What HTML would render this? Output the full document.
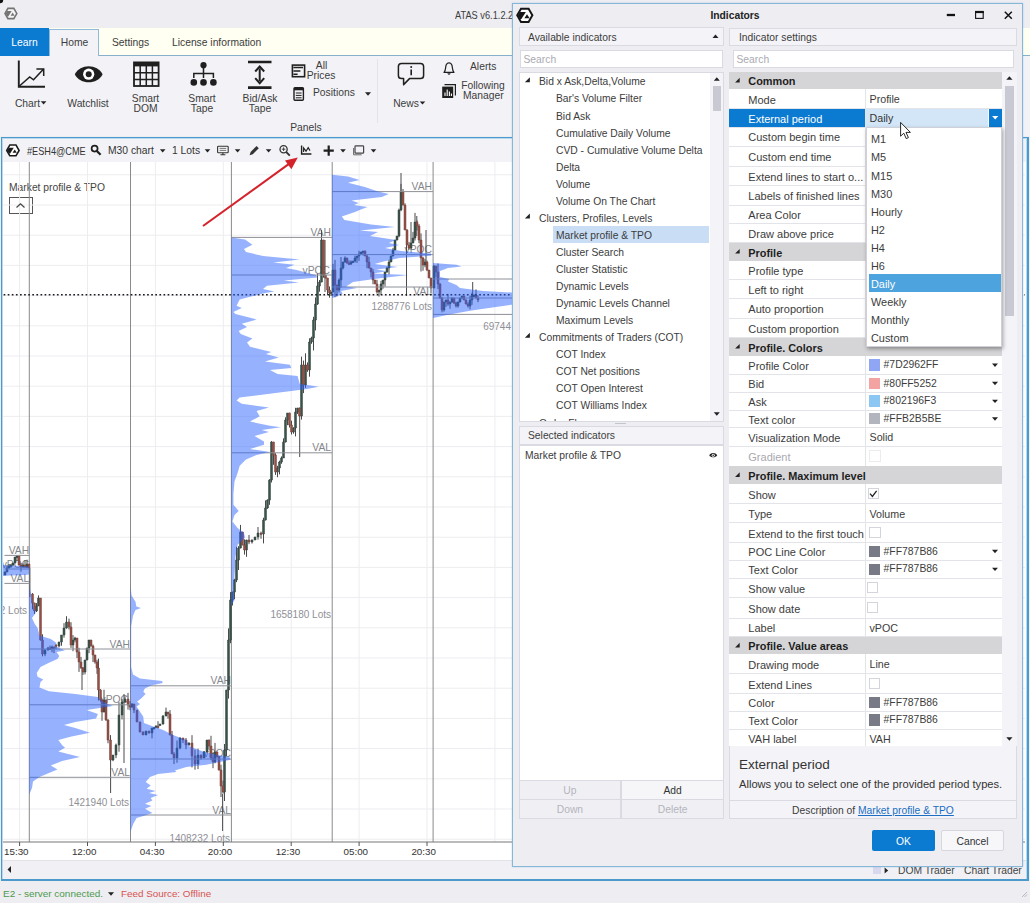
<!DOCTYPE html><html><head><meta charset="utf-8"><title>ATAS Indicators</title><style>html,body{margin:0;padding:0;}body{width:1030px;height:903px;overflow:hidden;position:relative;background:#ededf2;font-family:"Liberation Sans",sans-serif;}.r{position:absolute;}.t{position:absolute;white-space:nowrap;}svg text{font-family:"Liberation Sans",sans-serif;}</style></head><body>
<div class="r" style="left:0px;top:0px;width:1030px;height:30px;background:#ededf2;"></div>
<div class="r" style="left:0px;top:28px;width:1030px;height:27px;background:#fffff2;"></div>
<div class="r" style="left:0px;top:54.6px;width:1030px;height:1.2px;background:#86b0cc;"></div>
<div class="r" style="left:0px;top:56px;width:1030px;height:80px;background:#f3f3f7;"></div>
<div class="r" style="left:0px;top:28px;width:48.5px;height:27.5px;background:#0b7ad1;"></div>
<span class="t" style="left:-125.5px;width:300px;text-align:center;top:34.8px;font-size:10.3px;color:#fff;line-height:16px;">Learn</span>
<div class="r" style="left:49px;top:29px;width:50px;height:27px;background:#f3f3f7;border:1px solid #8fbbd9;border-bottom:none;box-sizing:border-box;"></div>
<span class="t" style="left:-75.5px;width:300px;text-align:center;top:35.3px;font-size:10.3px;color:#3c3c3c;line-height:16px;">Home</span>
<span class="t" style="left:112px;top:35.3px;font-size:10.3px;color:#3c3c3c;line-height:16px;">Settings</span>
<span class="t" style="left:172px;top:35.3px;font-size:10.3px;color:#3c3c3c;line-height:16px;">License information</span>
<span class="t" style="left:455px;top:7.8px;font-size:10.4px;color:#3c3c3c;line-height:16px;display:inline-block;transform:scaleX(0.89);transform-origin:0 50%;">ATAS v6.1.2.2</span>
<div class="r" style="left:0px;top:881px;width:1030px;height:22px;background:#ededf2;"></div>
<span class="t" style="left:3px;top:886.3px;font-size:9.95px;color:#4c9a4c;line-height:16px;">E2 - server connected.</span>
<span class="t" style="left:121px;top:886.3px;font-size:9.85px;color:#d9534f;line-height:16px;">Feed Source: Offline</span>
<span class="t" style="left:-119px;width:300px;text-align:center;top:95.5px;font-size:10.3px;color:#3c3c3c;line-height:16px;margin-left:-3.5px;">Chart</span>
<span class="t" style="left:-62px;width:300px;text-align:center;top:95.5px;font-size:10.3px;color:#3c3c3c;line-height:16px;">Watchlist</span>
<span class="t" style="left:-4.5px;width:300px;text-align:center;top:90.8px;font-size:10.3px;color:#3c3c3c;line-height:16px;">Smart</span>
<span class="t" style="left:-4.5px;width:300px;text-align:center;top:100.8px;font-size:10.3px;color:#3c3c3c;line-height:16px;">DOM</span>
<span class="t" style="left:52px;width:300px;text-align:center;top:90.8px;font-size:10.3px;color:#3c3c3c;line-height:16px;">Smart</span>
<span class="t" style="left:52px;width:300px;text-align:center;top:100.8px;font-size:10.3px;color:#3c3c3c;line-height:16px;">Tape</span>
<span class="t" style="left:110px;width:300px;text-align:center;top:90.8px;font-size:10.3px;color:#3c3c3c;line-height:16px;">Bid/Ask</span>
<span class="t" style="left:110px;width:300px;text-align:center;top:100.8px;font-size:10.3px;color:#3c3c3c;line-height:16px;">Tape</span>
<span class="t" style="left:171.5px;width:300px;text-align:center;top:57.8px;font-size:10.3px;color:#3c3c3c;line-height:16px;">All</span>
<span class="t" style="left:171px;width:300px;text-align:center;top:67.8px;font-size:10.3px;color:#3c3c3c;line-height:16px;">Prices</span>
<span class="t" style="left:313px;top:84.8px;font-size:10.3px;color:#3c3c3c;line-height:16px;">Positions</span>
<span class="t" style="left:156px;width:300px;text-align:center;top:119.8px;font-size:10.3px;color:#3c3c3c;line-height:16px;">Panels</span>
<span class="t" style="left:256px;width:300px;text-align:center;top:95.5px;font-size:10.3px;color:#3c3c3c;line-height:16px;">News</span>
<span class="t" style="left:470px;top:58.8px;font-size:10.3px;color:#3c3c3c;line-height:16px;">Alerts</span>
<span class="t" style="left:333px;width:300px;text-align:center;top:77.8px;font-size:10.3px;color:#3c3c3c;line-height:16px;">Following</span>
<span class="t" style="left:333.3px;width:300px;text-align:center;top:87.8px;font-size:10.3px;color:#3c3c3c;line-height:16px;">Manager</span>
<div class="r" style="left:377px;top:59px;width:1px;height:64px;background:#e3e3e9;"></div>
<div class="r" style="left:1px;top:136.5px;width:1028px;height:744px;background:#fff;border:2px solid #4a9bcb;box-sizing:border-box;"></div>
<div class="r" style="left:2px;top:138px;width:1025px;height:741px;border:1px solid #b9d9ee;box-sizing:border-box;"></div>
<div class="r" style="left:3px;top:139px;width:1023px;height:22.5px;background:#f3f3f7;"></div>
<div class="r" style="left:3px;top:860px;width:1023px;height:18.5px;background:#f1f1f5;"></div>
<div class="r" style="left:3px;top:860px;width:1023px;height:1px;background:#e2e2e8;"></div>
<span class="t" style="left:27px;top:143.3px;font-size:10.6px;color:#333;line-height:16px;display:inline-block;transform:scaleX(0.865);transform-origin:0 50%;">#ESH4@CME</span>
<span class="t" style="left:108px;top:143.3px;font-size:10.3px;color:#333;line-height:16px;">M30 chart</span>
<span class="t" style="left:172px;top:143.3px;font-size:10.3px;color:#333;line-height:16px;">1 Lots</span>
<span class="t" style="left:9px;top:179.8px;font-size:10.3px;color:#444;line-height:16px;">Market profile &amp; TPO</span>
<div class="r" style="left:8.5px;top:197px;width:24px;height:17px;background:#fff;border:1px solid #555;box-sizing:border-box;"></div>
<svg class="r" style="left:0;top:0" width="1030" height="903" viewBox="0 0 1030 903"><defs><clipPath id="cc"><rect x="3" y="162" width="1022" height="680"/></clipPath></defs><g clip-path="url(#cc)"><path d="M19.6 162V842 M87.5 162V842 M155.4 162V842 M223.3 162V842 M291.2 162V842 M359.1 162V842 M427.0 162V842 M494.9 162V842 M562.8 162V842 M630.7 162V842 M698.6 162V842 M766.5 162V842 M834.4 162V842 M902.3 162V842 M970.2 162V842 M3 174.8H1025 M3 205.0H1025 M3 235.2H1025 M3 265.4H1025 M3 295.6H1025 M3 325.8H1025 M3 356.0H1025 M3 386.2H1025 M3 416.4H1025 M3 446.6H1025 M3 476.8H1025 M3 507.0H1025 M3 537.2H1025 M3 567.4H1025 M3 597.6H1025 M3 627.8H1025 M3 658.0H1025 M3 688.2H1025 M3 718.4H1025 M3 748.6H1025 M3 778.8H1025 M3 809.0H1025 M3 839.2H1025" stroke="#ededf1" stroke-width="1" fill="none"/><path d="M29.3 162V842 M130.5 162V842 M231.4 162V842 M332.2 162V842 M433.1 162V842 M534 162V842 M635 162V842" stroke="#8a8a8a" stroke-width="1" fill="none"/><text x="29.2" y="554.3000000000001" text-anchor="end" font-size="10.3" fill="#84868c">VAH</text><text x="29.2" y="582.4000000000001" text-anchor="end" font-size="10.3" fill="#84868c">VAL</text><text x="29.2" y="568.1" text-anchor="end" font-size="10.3" fill="#84868c">vPOC</text><text x="130" y="647.7" text-anchor="end" font-size="10.3" fill="#84868c">VAH</text><text x="128" y="703.2" text-anchor="end" font-size="10.3" fill="#84868c">vPOC</text><text x="130" y="776.3000000000001" text-anchor="end" font-size="10.3" fill="#84868c">VAL</text><text x="231" y="684.2" text-anchor="end" font-size="10.3" fill="#84868c">VAH</text><text x="231" y="756.7" text-anchor="end" font-size="10.3" fill="#84868c">vPOC</text><text x="231" y="814.1" text-anchor="end" font-size="10.3" fill="#84868c">VAL</text><text x="331" y="235.7" text-anchor="end" font-size="10.3" fill="#84868c">VAH</text><text x="330" y="273.7" text-anchor="end" font-size="10.3" fill="#84868c">vPOC</text><text x="331" y="451.2" text-anchor="end" font-size="10.3" fill="#84868c">VAL</text><text x="432" y="189.7" text-anchor="end" font-size="10.3" fill="#84868c">VAH</text><text x="432" y="253.2" text-anchor="end" font-size="10.3" fill="#84868c">vPOC</text><text x="432" y="295.2" text-anchor="end" font-size="10.3" fill="#84868c">VAL</text><text x="27" y="614.0" text-anchor="end" font-size="10" fill="#8f9096">2 Lots</text><text x="129" y="806.3000000000001" text-anchor="end" font-size="10" fill="#8f9096">1421940 Lots</text><text x="230" y="842.1" text-anchor="end" font-size="10" fill="#8f9096">1408232 Lots</text><text x="331" y="618.1" text-anchor="end" font-size="10" fill="#8f9096">1658180 Lots</text><text x="432" y="310.40000000000003" text-anchor="end" font-size="10" fill="#8f9096">1288776 Lots</text><text x="511" y="329.6" text-anchor="end" font-size="10" fill="#8f9096">69744</text><path d="M5.0 571.4V575.1 M7.0 565.3V572.0 M9.0 564.5V568.7 M11.0 565.0V567.8 M13.0 563.0V566.0 M15.0 557.0V563.1 M17.0 555.1V560.9 M19.0 555.9V565.5 M21.0 563.0V571.7 M23.0 563.3V567.8 M25.0 560.0V567.0 M27.0 559.7V567.5 M29.0 563.9V568.1 M32.5 593.1V609.3 M34.5 602.7V614.0 M36.5 603.1V612.0 M38.5 595.4V606.0 M40.5 598.0V640.6 M42.5 634.3V656.3 M45.0 649.4V656.2 M48.0 646.9V650.5 M50.0 645.6V649.8 M52.0 645.6V652.3 M54.0 646.6V653.2 M56.0 644.1V649.3 M59.0 641.9V647.5 M61.5 635.0V645.7 M64.0 623.2V637.7 M66.5 616.2V628.7 M69.0 618.6V629.5 M71.0 622.3V647.9 M73.0 635.1V651.2 M75.0 636.8V642.3 M77.0 638.0V658.1 M79.0 647.8V671.9 M81.0 656.9V668.6 M83.0 667.0V674.9 M85.0 660.0V674.4 M87.0 647.7V660.2 M89.0 640.0V653.2 M91.0 639.9V646.5 M93.0 644.6V662.1 M95.0 654.9V663.7 M97.0 659.7V673.9 M98.5 658.6V700.5 M100.5 689.2V701.7 M102.0 698.6V720.8 M104.0 689.7V712.3 M106.0 699.6V720.8 M108.0 719.2V743.3 M110.5 735.1V761.0 M113.0 755.0V761.2 M116.0 743.6V758.2 M119.0 702.3V751.7 M122.0 698.9V719.5 M125.0 696.3V702.0 M128.0 692.9V709.6 M130.0 701.0V710.3 M132.0 703.1V707.9 M134.0 703.9V713.1 M137.0 710.0V722.1 M140.0 721.6V732.3 M143.0 731.3V735.0 M146.0 731.0V735.1 M149.0 730.9V733.7 M152.0 728.0V738.4 M154.0 727.3V729.3 M156.0 725.4V727.6 M158.0 721.2V728.6 M160.0 724.0V725.6 M163.0 715.0V724.6 M166.0 707.6V716.2 M168.0 712.0V718.7 M170.0 710.1V735.3 M172.0 730.9V754.0 M174.0 752.2V764.1 M177.0 740.5V762.8 M180.0 737.3V749.3 M183.0 737.9V743.1 M186.0 738.0V749.2 M189.0 742.4V745.3 M192.0 735.2V767.4 M195.0 749.6V769.7 M198.0 748.7V769.1 M201.0 754.7V759.6 M204.0 751.0V758.0 M207.0 740.0V752.9 M209.0 739.5V749.6 M211.0 735.8V760.2 M213.0 752.4V768.2 M215.0 742.9V763.3 M217.0 751.7V757.4 M219.0 756.5V770.5 M221.0 764.7V797.0 M223.0 780.6V793.7 M224.5 744.0V801.0 M226.5 689.9V756.1 M228.5 628.4V698.6 M230.5 592.1V643.2 M232.5 591.7V605.5 M234.5 578.8V599.2 M236.5 546.8V582.2 M238.5 546.2V570.0 M240.5 524.9V548.4 M242.5 531.8V545.3 M244.5 539.3V554.6 M246.5 539.8V556.8 M249.0 535.0V544.2 M252.0 539.4V543.6 M255.0 536.9V540.0 M258.0 527.0V539.7 M261.0 531.6V538.8 M263.5 517.7V543.4 M265.5 500.4V520.5 M267.5 499.4V508.8 M269.5 479.2V504.8 M271.5 441.1V482.5 M273.5 441.8V464.8 M275.5 453.2V474.9 M277.5 465.8V477.2 M279.5 460.7V474.4 M281.5 456.4V463.8 M283.5 438.3V458.0 M285.5 417.3V442.5 M287.5 413.0V425.2 M289.5 412.7V427.5 M291.5 420.7V434.5 M293.5 427.3V433.7 M295.5 407.8V436.4 M297.5 407.9V414.0 M299.5 407.5V416.7 M301.5 356.7V419.6 M303.5 360.6V393.1 M305.5 353.3V387.8 M307.5 362.4V371.8 M309.5 338.3V376.7 M311.5 336.7V343.8 M313.5 316.8V350.4 M315.5 297.4V330.4 M317.5 273.6V304.9 M319.5 280.0V291.7 M321.5 230.1V282.3 M323.5 239.8V277.7 M325.5 275.0V278.3 M327.5 277.9V295.0 M329.5 286.4V297.7 M331.0 291.9V296.0 M333.0 263.9V292.3 M335.0 259.9V297.2 M337.0 284.7V296.4 M339.0 278.4V292.4 M341.0 257.0V287.8 M343.0 261.8V269.4 M345.0 256.3V262.7 M347.0 257.7V263.7 M349.0 260.4V264.5 M351.0 260.4V265.0 M353.0 261.0V263.0 M355.0 255.7V262.5 M357.0 256.0V263.0 M359.0 250.8V260.9 M361.0 251.9V254.4 M363.0 251.0V255.5 M365.0 250.5V256.1 M367.0 254.6V268.3 M369.0 256.9V268.5 M371.0 267.9V277.4 M373.0 269.1V284.3 M375.0 279.9V284.0 M377.0 279.8V293.6 M379.0 290.0V296.6 M381.0 280.9V294.9 M383.0 280.0V288.7 M385.0 272.0V286.6 M387.0 266.7V272.7 M389.0 259.7V274.5 M391.0 255.5V262.1 M393.0 247.9V256.4 M395.0 239.9V250.3 M397.0 236.0V240.3 M399.0 208.6V237.3 M401.0 183.9V211.2 M403.0 189.0V205.4 M405.0 203.3V230.0 M407.0 229.2V245.0 M409.0 241.9V249.8 M411.0 242.7V249.6 M413.0 231.9V243.1 M415.0 212.9V240.5 M417.0 220.4V230.5 M419.0 224.1V243.2 M421.0 233.4V271.5 M423.0 257.0V270.7 M425.0 259.1V267.3 M427.0 260.6V271.1 M429.0 270.0V278.1 M431.0 277.9V293.5 M434.0 265.1V288.4 M436.0 265.9V277.4 M438.0 263.5V289.0 M440.0 283.0V298.7 M442.0 297.0V312.4 M444.0 301.8V311.7 M446.0 299.6V306.8 M448.0 293.9V305.9 M450.0 301.7V308.8 M452.0 297.4V302.8 M454.0 298.0V304.0 M456.0 301.7V307.5 M458.0 301.7V307.6 M460.0 298.0V302.4 M462.0 296.0V298.8 M464.0 296.0V300.0 M466.0 299.4V304.3 M468.0 302.2V307.5 M470.0 295.7V309.3 M472.0 292.7V304.9 M474.0 294.3V297.0 M476.0 289.4V298.1 M478.0 295.3V302.2 M29.9 568V597 M411 222V247 M426 230V262 M416.8 216V236 M406.5 245V296 M299.7 416V457 M472.7 282V296 M222.6 794V831 M110.6 756V793 M124 694V763 M82 667V690 M325 240V292 M401 173V195" stroke="#4a4a4a" stroke-width="1" fill="none"/><path d="M4.0 572.0h2.0v3.0h-2.0z M6.0 568.0h2.0v4.0h-2.0z M8.0 566.0h2.0v2.0h-2.0z M10.0 565.0h2.0v1.5h-2.0z M12.0 563.0h2.0v2.0h-2.0z M14.0 557.0h2.0v6.0h-2.0z M16.0 556.0h2.0v1.5h-2.0z M22.0 565.0h2.0v2.0h-2.0z M26.0 564.0h2.0v3.0h-2.0z M35.5 606.0h2.0v5.0h-2.0z M37.5 598.0h2.0v8.0h-2.0z M44.0 650.0h2.0v4.0h-2.0z M47.0 648.0h2.0v2.0h-2.0z M51.0 647.0h2.0v1.5h-2.0z M58.0 642.0h2.0v4.0h-2.0z M60.5 635.0h2.0v7.0h-2.0z M63.0 628.0h2.0v7.0h-2.0z M65.5 622.0h2.0v6.0h-2.0z M72.0 640.0h2.0v5.0h-2.0z M74.0 638.0h2.0v2.0h-2.0z M84.0 660.0h2.0v12.0h-2.0z M86.0 648.0h2.0v12.0h-2.0z M88.0 640.0h2.0v8.0h-2.0z M103.0 700.0h2.0v12.0h-2.0z M112.0 755.0h2.0v5.0h-2.0z M115.0 745.0h2.0v10.0h-2.0z M118.0 715.0h2.0v30.0h-2.0z M121.0 702.0h2.0v13.0h-2.0z M124.0 699.0h2.0v3.0h-2.0z M131.0 704.0h2.0v3.0h-2.0z M145.0 731.0h2.0v4.0h-2.0z M151.0 728.0h2.0v5.0h-2.0z M153.0 727.5h2.0v1.5h-2.0z M155.0 726.0h2.0v1.5h-2.0z M159.0 724.0h2.0v1.5h-2.0z M162.0 716.0h2.0v8.0h-2.0z M165.0 712.0h2.0v4.0h-2.0z M176.0 748.0h2.0v10.0h-2.0z M179.0 738.0h2.0v10.0h-2.0z M188.0 743.0h2.0v2.0h-2.0z M197.0 755.0h2.0v9.0h-2.0z M203.0 752.0h2.0v6.0h-2.0z M206.0 740.0h2.0v12.0h-2.0z M214.0 752.0h2.0v10.0h-2.0z M223.5 750.0h2.0v42.0h-2.0z M225.5 690.0h2.0v60.0h-2.0z M227.5 640.0h2.0v50.0h-2.0z M229.5 600.0h2.0v40.0h-2.0z M231.5 592.0h2.0v8.0h-2.0z M233.5 580.0h2.0v12.0h-2.0z M235.5 560.0h2.0v20.0h-2.0z M237.5 548.0h2.0v12.0h-2.0z M239.5 532.0h2.0v16.0h-2.0z M245.5 540.0h2.0v10.0h-2.0z M251.0 540.0h2.0v2.0h-2.0z M254.0 537.0h2.0v3.0h-2.0z M257.0 533.0h2.0v4.0h-2.0z M262.5 520.0h2.0v14.0h-2.0z M264.5 508.0h2.0v12.0h-2.0z M266.5 500.0h2.0v8.0h-2.0z M268.5 480.0h2.0v20.0h-2.0z M270.5 442.0h2.0v38.0h-2.0z M276.5 468.0h2.0v4.0h-2.0z M278.5 462.0h2.0v6.0h-2.0z M280.5 458.0h2.0v4.0h-2.0z M282.5 442.0h2.0v16.0h-2.0z M284.5 420.0h2.0v22.0h-2.0z M286.5 413.0h2.0v7.0h-2.0z M292.5 428.0h2.0v4.0h-2.0z M294.5 412.0h2.0v16.0h-2.0z M296.5 408.0h2.0v4.0h-2.0z M300.5 365.0h2.0v51.0h-2.0z M304.5 365.0h2.0v20.0h-2.0z M308.5 342.0h2.0v28.0h-2.0z M310.5 338.0h2.0v4.0h-2.0z M312.5 320.0h2.0v18.0h-2.0z M314.5 304.0h2.0v16.0h-2.0z M316.5 286.0h2.0v18.0h-2.0z M318.5 282.0h2.0v4.0h-2.0z M320.5 240.0h2.0v42.0h-2.0z M330.0 292.0h2.0v1.5h-2.0z M332.0 270.0h2.0v22.0h-2.0z M338.0 280.0h2.0v10.0h-2.0z M340.0 268.0h2.0v12.0h-2.0z M342.0 262.0h2.0v6.0h-2.0z M344.0 258.0h2.0v4.0h-2.0z M350.0 262.0h2.0v2.0h-2.0z M352.0 261.0h2.0v1.5h-2.0z M354.0 258.0h2.0v3.0h-2.0z M356.0 256.0h2.0v2.0h-2.0z M358.0 254.0h2.0v2.0h-2.0z M360.0 252.0h2.0v2.0h-2.0z M362.0 251.0h2.0v1.5h-2.0z M378.0 290.0h2.0v2.0h-2.0z M380.0 284.0h2.0v6.0h-2.0z M382.0 280.0h2.0v4.0h-2.0z M384.0 272.0h2.0v8.0h-2.0z M386.0 268.0h2.0v4.0h-2.0z M388.0 262.0h2.0v6.0h-2.0z M390.0 256.0h2.0v6.0h-2.0z M392.0 250.0h2.0v6.0h-2.0z M394.0 240.0h2.0v10.0h-2.0z M396.0 236.0h2.0v4.0h-2.0z M398.0 210.0h2.0v26.0h-2.0z M400.0 192.0h2.0v18.0h-2.0z M410.0 243.0h2.0v5.0h-2.0z M412.0 238.0h2.0v5.0h-2.0z M414.0 222.0h2.0v16.0h-2.0z M424.0 262.0h2.0v3.0h-2.0z M433.0 266.0h2.0v22.0h-2.0z M443.0 302.0h2.0v8.0h-2.0z M445.0 300.0h2.0v2.0h-2.0z M449.0 302.0h2.0v2.0h-2.0z M451.0 298.0h2.0v4.0h-2.0z M457.0 302.0h2.0v4.0h-2.0z M459.0 298.0h2.0v4.0h-2.0z M461.0 296.0h2.0v2.0h-2.0z M469.0 300.0h2.0v6.0h-2.0z M471.0 296.0h2.0v4.0h-2.0z M473.0 295.0h2.0v1.5h-2.0z" fill="#3b524b" stroke="#30443e" stroke-width="0.5"/><path d="M18.0 556.0h2.0v9.0h-2.0z M20.0 565.0h2.0v2.0h-2.0z M24.0 565.0h2.0v2.0h-2.0z M28.0 564.0h2.0v4.0h-2.0z M31.5 594.0h2.0v9.0h-2.0z M33.5 603.0h2.0v8.0h-2.0z M39.5 598.0h2.0v42.0h-2.0z M41.5 640.0h2.0v14.0h-2.0z M49.0 648.0h2.0v1.5h-2.0z M53.0 647.0h2.0v1.5h-2.0z M55.0 645.0h2.0v1.5h-2.0z M68.0 622.0h2.0v5.0h-2.0z M70.0 627.0h2.0v18.0h-2.0z M76.0 638.0h2.0v14.0h-2.0z M78.0 652.0h2.0v10.0h-2.0z M80.0 662.0h2.0v6.0h-2.0z M82.0 668.0h2.0v4.0h-2.0z M90.0 640.0h2.0v6.0h-2.0z M92.0 646.0h2.0v9.0h-2.0z M94.0 655.0h2.0v7.0h-2.0z M96.0 662.0h2.0v6.0h-2.0z M97.5 668.0h2.0v22.0h-2.0z M99.5 690.0h2.0v10.0h-2.0z M101.0 700.0h2.0v12.0h-2.0z M105.0 700.0h2.0v20.0h-2.0z M107.0 720.0h2.0v20.0h-2.0z M109.5 740.0h2.0v20.0h-2.0z M127.0 699.0h2.0v6.0h-2.0z M129.0 705.0h2.0v2.0h-2.0z M133.0 704.0h2.0v6.0h-2.0z M136.0 710.0h2.0v12.0h-2.0z M139.0 722.0h2.0v10.0h-2.0z M142.0 732.0h2.0v3.0h-2.0z M148.0 731.0h2.0v2.0h-2.0z M157.0 726.0h2.0v1.5h-2.0z M167.0 712.0h2.0v2.0h-2.0z M169.0 714.0h2.0v21.0h-2.0z M171.0 735.0h2.0v19.0h-2.0z M173.0 754.0h2.0v4.0h-2.0z M182.0 738.0h2.0v2.0h-2.0z M185.0 740.0h2.0v5.0h-2.0z M191.0 743.0h2.0v13.0h-2.0z M194.0 756.0h2.0v8.0h-2.0z M200.0 755.0h2.0v3.0h-2.0z M208.0 740.0h2.0v6.0h-2.0z M210.0 746.0h2.0v12.0h-2.0z M212.0 758.0h2.0v4.0h-2.0z M216.0 752.0h2.0v5.0h-2.0z M218.0 757.0h2.0v13.0h-2.0z M220.0 770.0h2.0v16.0h-2.0z M222.0 786.0h2.0v6.0h-2.0z M241.5 532.0h2.0v13.0h-2.0z M243.5 545.0h2.0v5.0h-2.0z M248.0 540.0h2.0v2.0h-2.0z M260.0 533.0h2.0v1.5h-2.0z M272.5 442.0h2.0v13.0h-2.0z M274.5 455.0h2.0v17.0h-2.0z M288.5 413.0h2.0v12.0h-2.0z M290.5 425.0h2.0v7.0h-2.0z M298.5 408.0h2.0v8.0h-2.0z M302.5 365.0h2.0v20.0h-2.0z M306.5 365.0h2.0v5.0h-2.0z M322.5 240.0h2.0v35.0h-2.0z M324.5 275.0h2.0v3.0h-2.0z M326.5 278.0h2.0v12.0h-2.0z M328.5 290.0h2.0v3.0h-2.0z M334.0 270.0h2.0v15.0h-2.0z M336.0 285.0h2.0v5.0h-2.0z M346.0 258.0h2.0v5.0h-2.0z M348.0 263.0h2.0v1.5h-2.0z M364.0 251.0h2.0v5.0h-2.0z M366.0 256.0h2.0v6.0h-2.0z M368.0 262.0h2.0v6.0h-2.0z M370.0 268.0h2.0v4.0h-2.0z M372.0 272.0h2.0v8.0h-2.0z M374.0 280.0h2.0v4.0h-2.0z M376.0 284.0h2.0v8.0h-2.0z M402.0 192.0h2.0v13.0h-2.0z M404.0 205.0h2.0v25.0h-2.0z M406.0 230.0h2.0v15.0h-2.0z M408.0 245.0h2.0v3.0h-2.0z M416.0 222.0h2.0v4.0h-2.0z M418.0 226.0h2.0v14.0h-2.0z M420.0 240.0h2.0v18.0h-2.0z M422.0 258.0h2.0v7.0h-2.0z M426.0 262.0h2.0v8.0h-2.0z M428.0 270.0h2.0v8.0h-2.0z M430.0 278.0h2.0v10.0h-2.0z M435.0 266.0h2.0v6.0h-2.0z M437.0 272.0h2.0v12.0h-2.0z M439.0 284.0h2.0v14.0h-2.0z M441.0 298.0h2.0v12.0h-2.0z M447.0 300.0h2.0v4.0h-2.0z M453.0 298.0h2.0v5.0h-2.0z M455.0 303.0h2.0v3.0h-2.0z M463.0 296.0h2.0v4.0h-2.0z M465.0 300.0h2.0v4.0h-2.0z M467.0 304.0h2.0v2.0h-2.0z M475.0 295.0h2.0v3.0h-2.0z M477.0 298.0h2.0v2.0h-2.0z" fill="#935048" stroke="#7a4038" stroke-width="0.5"/><path d="M4.4 555.4H29.4 M4.4 569H29.4 M4.4 583.4H29.4 M29.2 649H130.5 M29.2 704.8H130.5 M29.2 777.3H130.5 M130.5 685.8H231.4 M130.5 759H231.4 M130.5 815H231.4 M231.4 237.4H332 M231.4 275H332 M231.4 452.8H332 M332 191.6H433 M332 254.6H433 M332 287H433 M433 279H520 M433 298H520 M433 314.4H520" stroke="#8e9096" stroke-width="1" fill="none"/><path d="M3.6 294.7H1025" stroke="#1c1c1c" stroke-width="1.5" stroke-dasharray="1.7 2.4" fill="none"/><path d="M2 565L2 565L10 565.6L22 566L29.4 566.4L29.4 574.6L20 575.2L10 575.6L2 576L2 576Z" fill="rgba(41,98,255,0.49)"/><path d="M29.2 586.5L29.2 586.5L31 594L33 605L35.8 612.8L32 618L34.8 624L37.6 628L39.5 635.4L50.8 639L56.5 643L54.6 645.7L60.2 648.5L65 650.4L56.5 652L59.3 656L57.4 659L49 662.7L40.5 667L36.7 673L37.6 676.8L43.3 679.6L40.5 682L39.5 687.5L49 691.3L75.3 694L97.9 697L101.6 700.7L109 704.5L113 706L86.6 710L97.9 714L96 718.6L75.3 722L64 725L75.3 728L90 732.7L71.5 736.5L58.3 740L62 745L65 747.7L58.3 751.5L80 757L62 761L50.8 765.6L57.4 769.4L49 773L39.5 777L33 781.6L32 788L29.2 794.8L29.2 794.8Z" fill="rgba(41,98,255,0.49)"/><path d="M130.5 586L130.5 586L131.6 595.5L135.5 601.7L136.3 606.4L141 608L135.5 610L133 615.7L131.2 626.5L131.2 667L133 674.6L140 678.5L162 681L162.7 683L151 685.5L144.8 688.6L143.3 691.7L145.6 694L141.7 698L137 701.8L140 704L136.6 706.6L143.2 716.6L144 723L153.2 726.6L163.2 730L173 735L186.4 740L189.7 746.5L203 751.5L213 754L229.6 757.3L230.4 759.8L219.6 762L206.3 764.7L186.4 767L174.8 770.6L176.5 772L158 774L150 777L145.7 782L150.7 785.5L146.6 788.8L155.7 791L149 793L158 795L150.7 798L152.4 800.4L145 803.8L151.5 806L145 808.7L152.4 813L145 815.4L136.6 818L133.3 823.7L130.8 831L130.5 831Z" fill="rgba(41,98,255,0.49)"/><path d="M231.4 237.4L231.4 237.4L245 239.5L252.4 244.7L244 249L246 252L263 256L299.7 259.5L273.4 262.6L294.5 264.7L286 268L296.6 270L315.5 275L317.6 277.4L284 280.5L298.7 282.6L267 285.8L263 289L274.5 291.5L265 293L239.7 299.5L236.6 305.8L241.8 307.9L233.4 312L235.5 314L256.6 319.5L241.8 323.7L247 327L238.7 331L240.8 334L252.4 338.4L247 342.6L250 346.8L271.3 352L266 354L278.7 357.4L265 361.6L290 364.7L291.3 367.9L270 370L277.6 374L297.6 376L299.7 383.7L318.7 386.8L307 389L275.5 393L239.7 397.4L236.6 400.5L241.8 403.7L269 407.5L256.6 411L259.7 416.3L250 421.6L270 425.8L280.8 427.3L261.8 430L269 432L254.5 436L264 441.6L264 444.7L250 449L270 452L256.6 455L246 459.5L239.7 465.8L237.6 473L234.5 481.6L233.4 494L233.4 504.7L238.7 511L234.5 515L232.4 521.6L237.6 528L244 533L245 537.4L237.6 544.7L235.5 557L234.5 576L233.4 589L234.5 600L231.4 606L231.4 606Z" fill="rgba(41,98,255,0.49)"/><path d="M332 174.7L332 174.7L348 176.5L359.6 180L348 182.7L364.9 187L378 191.6L388.8 194L381.7 197L351.6 200.4L358.7 203L354 205L367.5 207L359.6 210L355 212L341.8 216.4L344.5 220L371 224.4L395 227L360 230.6L378 232L370 236L396 240L388.8 243L399.4 245L385 248L401 251L431 253.6L431 255.7L399.4 258L383.5 261.6L374.6 264L397.7 267L376.4 269.6L387 271.3L373 273.5L408 275L378 278.4L353 282L346 286.4L357 288L341 291L342.7 293.5L335.6 297L332 298L332 298Z" fill="rgba(41,98,255,0.49)"/><path d="M433 263L433 263L456.4 264.7L461.6 266.6L448 268L440 271L440 277L449 279L448 281.5L456.4 285L460 288L483 291L520 293L520 303.6L489 308L471.5 310.6L449.4 314.6L435.5 317.5L433 318L433 318Z" fill="rgba(41,98,255,0.49)"/></g><path d="M3 842H1025" stroke="#777" stroke-width="1" fill="none"/><path d="M19.6 842v4 M87.5 842v4 M155.4 842v4 M223.3 842v4 M291.2 842v4 M359.1 842v4 M427 842v4" stroke="#555" stroke-width="1" fill="none"/><text x="16.3" y="855.3" text-anchor="middle" font-size="9.8" fill="#333">15:30</text><text x="84.2" y="855.3" text-anchor="middle" font-size="9.8" fill="#333">12:00</text><text x="152.1" y="855.3" text-anchor="middle" font-size="9.8" fill="#333">04:30</text><text x="220.0" y="855.3" text-anchor="middle" font-size="9.8" fill="#333">20:00</text><text x="287.9" y="855.3" text-anchor="middle" font-size="9.8" fill="#333">12:30</text><text x="355.8" y="855.3" text-anchor="middle" font-size="9.8" fill="#333">05:00</text><text x="423.7" y="855.3" text-anchor="middle" font-size="9.8" fill="#333">20:30</text><polygon points="7.5,869.5 11,866 11,873" fill="#222"/><path d="M203 226L290 163.2" stroke="#d4222a" stroke-width="2.1" fill="none"/><polygon points="297.8,157.6 285,160.6 291.4,169.2" fill="#d4222a"/><path d="M16.5 207.5L20.5 203.8L24.5 207.5" stroke="#444" stroke-width="1.2" fill="none"/></svg>
<svg class="r" style="left:0;top:0" width="1030" height="903" viewBox="0 0 1030 903"><circle cx="0" cy="0" r="3.2" fill="#111"/><polygon points="17.70,13.50 14.30,19.39 7.50,19.39 4.10,13.50 7.50,7.61 14.30,7.61" fill="#747474"/><polygon points="15.93,13.50 13.42,17.86 8.38,17.86 5.87,13.50 8.38,9.14 13.42,9.14" fill="#f4f4f6"/><polygon points="5.51,13.50 7.07,10.92 11.68,10.92 8.24,16.39 7.23,16.39" fill="#747474"/><polygon points="12.62,12.56 10.59,15.84 14.65,15.84" fill="#747474"/><path d="M18.8 60.5V86.8H45" stroke="#1f1f1f" stroke-width="1.9" fill="none"/><path d="M19.2 86.2L29.7 77L33.5 79.8L43.4 69.2M36.4 69H43.7V76" stroke="#1f1f1f" stroke-width="1.5" fill="none"/><path d="M74.8 74.3C80 63.6 97.4 63.6 102.6 74.3C97.4 85 80 85 74.8 74.3Z" fill="#1f1f1f"/><circle cx="88.7" cy="74.2" r="5.6" fill="#fff"/><circle cx="88.7" cy="74.2" r="3" fill="#1f1f1f"/><rect x="134" y="62.4" width="24.6" height="23.6" fill="none" stroke="#1f1f1f" stroke-width="1.8"/><rect x="134" y="62.4" width="24.6" height="4" fill="#1f1f1f"/><path d="M140.2 66V86M146.3 66V86M152.4 66V86M134 72.8H158.6M134 79.4H158.6" stroke="#1f1f1f" stroke-width="1.5" fill="none"/><circle cx="203.5" cy="65.2" r="3.1" fill="#1f1f1f"/><path d="M203.5 66V78M193.8 78V73.6H213.4V78" stroke="#1f1f1f" stroke-width="1.5" fill="none"/><circle cx="193.8" cy="82.4" r="3.3" fill="#1f1f1f"/><circle cx="203.5" cy="82.4" r="3.3" fill="#1f1f1f"/><circle cx="213.4" cy="82.4" r="3.3" fill="#1f1f1f"/><path d="M248 62H271.5M248 87.6H271.5" stroke="#1f1f1f" stroke-width="2.6" fill="none"/><path d="M259.7 68.5V81" stroke="#1f1f1f" stroke-width="2" fill="none"/><path d="M255.2 71.5L259.7 66.5L264.2 71.5M255.2 78.2L259.7 83.2L264.2 78.2" stroke="#1f1f1f" stroke-width="2" fill="none"/><rect x="292.4" y="65.1" width="12.2" height="11.6" fill="none" stroke="#1f1f1f" stroke-width="1.6"/><path d="M293.4 67.6H303M293.4 70.9H300.4M293.4 74.2H297.6" stroke="#1f1f1f" stroke-width="1.5" fill="none"/><rect x="294" y="87.6" width="9.4" height="12.6" rx="1" fill="none" stroke="#1f1f1f" stroke-width="1.4"/><path d="M294 89H303.4" stroke="#1f1f1f" stroke-width="2.6"/><path d="M295.8 93H301.6M295.8 95.4H301.6M295.8 97.8H301.6" stroke="#1f1f1f" stroke-width="1" fill="none"/><polygon points="365.0,92.25 371.0,92.25 368,95.75" fill="#222"/><path d="M401.5 63.4H420.5Q423.6 63.4 423.6 66.5V75.5Q423.6 78.6 420.5 78.6H409.5L403.6 84.6V78.6H401.5Q398.4 78.6 398.4 75.5V66.5Q398.4 63.4 401.5 63.4Z" fill="none" stroke="#1f1f1f" stroke-width="1.5" stroke-linejoin="round"/><path d="M411.2 69.4V75.2" stroke="#1f1f1f" stroke-width="1.6"/><circle cx="411.2" cy="67" r="1" fill="#1f1f1f"/><path d="M444 72.4C446.2 70.5 445.2 66.5 446.3 64.6C447.6 62.2 450.4 62.2 451.7 64.6C452.8 66.5 451.8 70.5 454 72.4Z" fill="none" stroke="#1f1f1f" stroke-width="1.2" stroke-linejoin="round"/><path d="M447.8 73.2Q449 75.2 450.2 73.2" stroke="#1f1f1f" stroke-width="1.1" fill="none"/><path d="M444.5 84.6H455.4V95.5" stroke="#1f1f1f" stroke-width="1.2" fill="none"/><rect x="442.2" y="86.6" width="11" height="11.4" fill="#1f1f1f"/><path d="M445 96V92.5M447.2 96V89.5M449.4 96V91.5M451.4 96V93.5" stroke="#fff" stroke-width="1.1"/><polygon points="40.800000000000004,101.2 46.4,101.2 43.6,104.39999999999999" fill="#222"/><polygon points="419.7,101.4 425.3,101.4 422.5,104.6" fill="#222"/><polygon points="108.0,892.3 114.0,892.3 111,895.7" fill="#222"/><polygon points="20.00,150.40 16.45,156.55 9.35,156.55 5.80,150.40 9.35,144.25 16.45,144.25" fill="#1a1a1a"/><polygon points="18.15,150.40 15.53,154.95 10.27,154.95 7.65,150.40 10.27,145.85 15.53,145.85" fill="#fff"/><polygon points="7.27,150.40 8.90,147.71 13.72,147.71 10.13,153.42 9.06,153.42" fill="#1a1a1a"/><polygon points="14.70,149.42 12.57,152.85 16.82,152.85" fill="#1a1a1a"/><circle cx="94.6" cy="148.6" r="3" fill="none" stroke="#1f1f1f" stroke-width="1.7"/><path d="M96.8 150.9L100.6 154.8" stroke="#1f1f1f" stroke-width="2.2"/><polygon points="159.89999999999998,149.20000000000002 165.5,149.20000000000002 162.7,152.4" fill="#222"/><polygon points="204.7,149.20000000000002 210.3,149.20000000000002 207.5,152.4" fill="#222"/><polygon points="234.79999999999998,149.20000000000002 240.4,149.20000000000002 237.6,152.4" fill="#222"/><polygon points="265.8,149.20000000000002 271.40000000000003,149.20000000000002 268.6,152.4" fill="#222"/><polygon points="340.2,149.20000000000002 345.8,149.20000000000002 343,152.4" fill="#222"/><polygon points="370.7,149.20000000000002 376.3,149.20000000000002 373.5,152.4" fill="#222"/><rect x="217.6" y="146.2" width="10.6" height="6.6" rx="0.8" fill="none" stroke="#333" stroke-width="1.1"/><path d="M219.6 148.4H226.2M219.6 150.4H226.2" stroke="#555" stroke-width="0.8"/><path d="M222.9 152.8V154.6M220.4 154.8H225.4" stroke="#333" stroke-width="1.1"/><path d="M249.6 155.2L250.6 152L256.6 146L258.8 148.2L252.8 154.2Z" fill="#333"/><circle cx="283.6" cy="149.2" r="3.6" fill="none" stroke="#333" stroke-width="1.3"/><path d="M286.2 152L289.8 155.6" stroke="#333" stroke-width="1.8"/><path d="M281.8 149.2H285.4M283.6 147.4V151" stroke="#333" stroke-width="0.9"/><path d="M301.6 145.6V154H311.4" stroke="#1f1f1f" stroke-width="1.4" fill="none"/><path d="M303.6 152V148L306 151.2L308.2 147.6L310 150.6" stroke="#1f1f1f" stroke-width="1.1" fill="none"/><path d="M323.6 150.6H333.8M328.7 145.5V155.7" stroke="#1f1f1f" stroke-width="2.2"/><rect x="355" y="145.8" width="8.6" height="7.4" rx="0.8" fill="#f3f3f7" stroke="#444" stroke-width="1.2"/><path d="M353.6 148V154.8H361.6" stroke="#666" stroke-width="1" fill="none"/></svg>
<span class="t" style="left:898px;top:863.3px;font-size:10.3px;color:#444;line-height:16px;">DOM Trader</span>
<span class="t" style="left:964px;top:863.3px;font-size:10.3px;color:#444;line-height:16px;">Chart Trader</span>
<div class="r" style="left:873px;top:866px;width:8px;height:8px;background:#d8d8ee;"></div>
<div class="r" style="left:512px;top:3px;width:511px;height:864px;background:#ededf2;border:1px solid #86b6d8;box-sizing:border-box;box-shadow:0 0 1.5px rgba(90,150,200,0.4);"></div>
<span class="t" style="left:585px;width:300px;text-align:center;top:7.8px;font-size:10.3px;color:#222;line-height:16px;font-weight:bold;">Indicators</span>
<div class="r" style="left:518.5px;top:27px;width:205.5px;height:18.5px;background:#f4f4f8;border:1px solid #dadae2;box-sizing:border-box;"></div>
<span class="t" style="left:528px;top:30.0px;font-size:10.3px;color:#3c3c3c;line-height:16px;">Available indicators</span>
<div class="r" style="left:519.5px;top:49.5px;width:203.5px;height:18px;background:#fff;border:1px solid #dadae2;box-sizing:border-box;"></div>
<span class="t" style="left:523.5px;top:51.8px;font-size:10.3px;color:#aaaab2;line-height:16px;">Search</span>
<div class="r" style="left:518.5px;top:71.5px;width:205.5px;height:350.3px;background:#fff;border:1px solid #dadae2;box-sizing:border-box;"></div>
<div class="r" style="left:709.5px;top:72.5px;width:13.5px;height:348.3px;background:#f4f4f8;"></div>
<div class="r" style="left:713.2px;top:86px;width:7.4px;height:24.5px;background:#c9c9d3;"></div>
<span class="t" style="left:539px;top:74.4px;font-size:10.3px;color:#3c3c3c;line-height:16px;">Bid x Ask,Delta,Volume</span>
<span class="t" style="left:556px;top:91.4px;font-size:10.3px;color:#3c3c3c;line-height:16px;">Bar's Volume Filter</span>
<span class="t" style="left:556px;top:108.5px;font-size:10.3px;color:#3c3c3c;line-height:16px;">Bid Ask</span>
<span class="t" style="left:556px;top:125.5px;font-size:10.3px;color:#3c3c3c;line-height:16px;">Cumulative Daily Volume</span>
<span class="t" style="left:556px;top:142.5px;font-size:10.3px;color:#3c3c3c;line-height:16px;">CVD - Cumulative Volume Delta</span>
<span class="t" style="left:556px;top:159.6px;font-size:10.3px;color:#3c3c3c;line-height:16px;">Delta</span>
<span class="t" style="left:556px;top:176.6px;font-size:10.3px;color:#3c3c3c;line-height:16px;">Volume</span>
<span class="t" style="left:556px;top:193.6px;font-size:10.3px;color:#3c3c3c;line-height:16px;">Volume On The Chart</span>
<span class="t" style="left:539px;top:210.6px;font-size:10.3px;color:#3c3c3c;line-height:16px;">Clusters, Profiles, Levels</span>
<div class="r" style="left:553.3px;top:226.27px;width:155.4px;height:16.4px;background:#c9def5;"></div>
<span class="t" style="left:556px;top:227.7px;font-size:10.3px;color:#3c3c3c;line-height:16px;">Market profile &amp; TPO</span>
<span class="t" style="left:556px;top:244.7px;font-size:10.3px;color:#3c3c3c;line-height:16px;">Cluster Search</span>
<span class="t" style="left:556px;top:261.7px;font-size:10.3px;color:#3c3c3c;line-height:16px;">Cluster Statistic</span>
<span class="t" style="left:556px;top:278.8px;font-size:10.3px;color:#3c3c3c;line-height:16px;">Dynamic Levels</span>
<span class="t" style="left:556px;top:295.8px;font-size:10.3px;color:#3c3c3c;line-height:16px;">Dynamic Levels Channel</span>
<span class="t" style="left:556px;top:312.8px;font-size:10.3px;color:#3c3c3c;line-height:16px;">Maximum Levels</span>
<span class="t" style="left:539px;top:329.9px;font-size:10.3px;color:#3c3c3c;line-height:16px;">Commitments of Traders (COT)</span>
<span class="t" style="left:556px;top:346.9px;font-size:10.3px;color:#3c3c3c;line-height:16px;">COT Index</span>
<span class="t" style="left:556px;top:363.9px;font-size:10.3px;color:#3c3c3c;line-height:16px;">COT Net positions</span>
<span class="t" style="left:556px;top:380.9px;font-size:10.3px;color:#3c3c3c;line-height:16px;">COT Open Interest</span>
<span class="t" style="left:556px;top:398.0px;font-size:10.3px;color:#3c3c3c;line-height:16px;">COT Williams Index</span>
<div class="r" style="left:519.5px;top:415px;width:189px;height:5.8px;overflow:hidden;"><span class="t" style="left:19.5px;top:0.8px;font-size:10.3px;line-height:16px;color:#3c3c3c;">Order Flow</span></div>
<div class="r" style="left:615px;top:422.6px;width:11px;height:1.6px;background:#c4c4cc;"></div>
<div class="r" style="left:518.5px;top:425.5px;width:205.5px;height:19px;background:#f4f4f8;border:1px solid #dadae2;box-sizing:border-box;"></div>
<span class="t" style="left:528px;top:427.8px;font-size:10.3px;color:#3c3c3c;line-height:16px;">Selected indicators</span>
<div class="r" style="left:518.5px;top:444.5px;width:205.5px;height:336px;background:#fff;border:1px solid #dadae2;box-sizing:border-box;"></div>
<span class="t" style="left:525px;top:448.3px;font-size:10.3px;color:#3c3c3c;line-height:16px;">Market profile &amp; TPO</span>
<div class="r" style="left:518.5px;top:779.5px;width:102.8px;height:20px;background:#f0f0f4;border:1px solid #dadae2;box-sizing:border-box;"></div>
<span class="t" style="left:419.9px;width:300px;text-align:center;top:782.6px;font-size:10.3px;color:#b4b4bc;line-height:16px;">Up</span>
<div class="r" style="left:621.3px;top:779.5px;width:102.7px;height:20px;background:#f6f6f9;border:1px solid #dadae2;box-sizing:border-box;"></div>
<span class="t" style="left:522.65px;width:300px;text-align:center;top:782.6px;font-size:10.3px;color:#333;line-height:16px;">Add</span>
<div class="r" style="left:518.5px;top:799.2px;width:102.8px;height:20px;background:#f0f0f4;border:1px solid #dadae2;box-sizing:border-box;"></div>
<span class="t" style="left:419.9px;width:300px;text-align:center;top:802.3px;font-size:10.3px;color:#b4b4bc;line-height:16px;">Down</span>
<div class="r" style="left:621.3px;top:799.2px;width:102.7px;height:20px;background:#f0f0f4;border:1px solid #dadae2;box-sizing:border-box;"></div>
<span class="t" style="left:522.65px;width:300px;text-align:center;top:802.3px;font-size:10.3px;color:#b4b4bc;line-height:16px;">Delete</span>
<div class="r" style="left:729px;top:27.5px;width:288px;height:18.5px;background:#f4f4f8;border:1px solid #dadae2;box-sizing:border-box;"></div>
<span class="t" style="left:739px;top:30.3px;font-size:10.3px;color:#3c3c3c;line-height:16px;">Indicator settings</span>
<div class="r" style="left:733px;top:49.5px;width:280.5px;height:18.5px;background:#fff;border:1px solid #dadae2;box-sizing:border-box;"></div>
<span class="t" style="left:736.5px;top:51.8px;font-size:10.3px;color:#aaaab2;line-height:16px;">Search</span>
<div class="r" style="left:729.3px;top:71.5px;width:272.70000000000005px;height:674px;background:#fff;"></div>
<div class="r" style="left:1002px;top:71.5px;width:15px;height:674px;background:#f4f4f8;"></div>
<div class="r" style="left:1004.9px;top:86px;width:8.7px;height:230px;background:#c9c9d3;"></div>
<div class="r" style="left:0;top:0;width:1030px;height:745.5px;overflow:hidden;">
<div class="r" style="left:865.4px;top:89px;width:1px;height:660px;background:#e3e3ea;"></div>
<div class="r" style="left:729.3px;top:72px;width:272.70000000000005px;height:17px;background:#d5d5d7;"></div>
<span class="t" style="left:748.3px;top:73.4px;font-size:10.9px;color:#1e1e1e;line-height:16px;font-weight:bold;">Common</span>
<div class="r" style="left:729.3px;top:108.0px;width:272.70000000000005px;height:1px;background:#e3e3ea;"></div>
<span class="t" style="left:748.3px;top:91.6px;font-size:11px;color:#3c3c3c;line-height:16px;">Mode</span>
<span class="t" style="left:869.5px;top:91.0px;font-size:10.7px;color:#3c3c3c;line-height:16px;">Profile</span>
<div class="r" style="left:729.3px;top:126.5px;width:272.70000000000005px;height:1px;background:#e3e3ea;"></div>
<div class="r" style="left:729.3px;top:108.5px;width:136.10000000000002px;height:18.5px;background:#0b7ad1;"></div>
<div class="r" style="left:866.4px;top:108.5px;width:122.10000000000002px;height:18.5px;background:#d3e6f7;"></div>
<div class="r" style="left:988.5px;top:108.5px;width:13.5px;height:18.5px;background:#0b7ad1;"></div>
<span class="t" style="left:748.3px;top:110.6px;font-size:11px;color:#fff;line-height:16px;">External period</span>
<span class="t" style="left:869.5px;top:110.0px;font-size:10.7px;color:#333;line-height:16px;">Daily</span>
<div class="r" style="left:729.3px;top:145.5px;width:272.70000000000005px;height:1px;background:#e3e3ea;"></div>
<span class="t" style="left:748.3px;top:129.4px;font-size:11px;color:#3c3c3c;line-height:16px;">Custom begin time</span>
<div class="r" style="left:729.3px;top:165.5px;width:272.70000000000005px;height:1px;background:#e3e3ea;"></div>
<span class="t" style="left:748.3px;top:148.9px;font-size:11px;color:#3c3c3c;line-height:16px;">Custom end time</span>
<div class="r" style="left:729.3px;top:184.8px;width:272.70000000000005px;height:1px;background:#e3e3ea;"></div>
<span class="t" style="left:748.3px;top:168.6px;font-size:11px;color:#3c3c3c;line-height:16px;">Extend lines to start o...</span>
<div class="r" style="left:729.3px;top:204.9px;width:272.70000000000005px;height:1px;background:#e3e3ea;"></div>
<span class="t" style="left:748.3px;top:188.3px;font-size:11px;color:#3c3c3c;line-height:16px;">Labels of finished lines</span>
<div class="r" style="left:729.3px;top:222.8px;width:272.70000000000005px;height:1px;background:#e3e3ea;"></div>
<span class="t" style="left:748.3px;top:207.3px;font-size:11px;color:#3c3c3c;line-height:16px;">Area Color</span>
<div class="r" style="left:729.3px;top:242.2px;width:272.70000000000005px;height:1px;background:#e3e3ea;"></div>
<span class="t" style="left:748.3px;top:225.9px;font-size:11px;color:#3c3c3c;line-height:16px;">Draw above price</span>
<div class="r" style="left:729.3px;top:242.7px;width:272.70000000000005px;height:17.900000000000034px;background:#d5d5d7;"></div>
<span class="t" style="left:748.3px;top:244.6px;font-size:10.9px;color:#1e1e1e;line-height:16px;font-weight:bold;">Profile</span>
<div class="r" style="left:729.3px;top:278.7px;width:272.70000000000005px;height:1px;background:#e3e3ea;"></div>
<span class="t" style="left:748.3px;top:262.8px;font-size:11px;color:#3c3c3c;line-height:16px;">Profile type</span>
<div class="r" style="left:729.3px;top:298.1px;width:272.70000000000005px;height:1px;background:#e3e3ea;"></div>
<span class="t" style="left:748.3px;top:281.8px;font-size:11px;color:#3c3c3c;line-height:16px;">Left to right</span>
<div class="r" style="left:729.3px;top:317.5px;width:272.70000000000005px;height:1px;background:#e3e3ea;"></div>
<span class="t" style="left:748.3px;top:301.2px;font-size:11px;color:#3c3c3c;line-height:16px;">Auto proportion</span>
<div class="r" style="left:729.3px;top:337.1px;width:272.70000000000005px;height:1px;background:#e3e3ea;"></div>
<span class="t" style="left:748.3px;top:320.7px;font-size:11px;color:#3c3c3c;line-height:16px;">Custom proportion</span>
<div class="r" style="left:729.3px;top:337.6px;width:272.70000000000005px;height:18.0px;background:#d5d5d7;"></div>
<span class="t" style="left:748.3px;top:339.5px;font-size:10.9px;color:#1e1e1e;line-height:16px;font-weight:bold;">Profile. Colors</span>
<div class="r" style="left:729.3px;top:373.8px;width:272.70000000000005px;height:1px;background:#e3e3ea;"></div>
<span class="t" style="left:748.3px;top:357.9px;font-size:11px;color:#3c3c3c;line-height:16px;">Profile Color</span>
<div class="r" style="left:869.3px;top:359.35px;width:11.2px;height:11.2px;background:#8ea6f4;"></div>
<span class="t" style="left:883.6px;top:357.3px;font-size:10.4px;color:#3c3c3c;line-height:16px;">#7D2962FF</span>
<div class="r" style="left:729.3px;top:391.6px;width:272.70000000000005px;height:1px;background:#e3e3ea;"></div>
<span class="t" style="left:748.3px;top:376.1px;font-size:11px;color:#3c3c3c;line-height:16px;">Bid</span>
<div class="r" style="left:869.3px;top:377.6px;width:11.2px;height:11.2px;background:#f4a3a3;"></div>
<span class="t" style="left:883.6px;top:375.5px;font-size:10.4px;color:#3c3c3c;line-height:16px;">#80FF5252</span>
<div class="r" style="left:729.3px;top:409.5px;width:272.70000000000005px;height:1px;background:#e3e3ea;"></div>
<span class="t" style="left:748.3px;top:394.0px;font-size:11px;color:#3c3c3c;line-height:16px;">Ask</span>
<div class="r" style="left:869.3px;top:395.45px;width:11.2px;height:11.2px;background:#8cc6f3;"></div>
<span class="t" style="left:883.6px;top:393.4px;font-size:10.4px;color:#3c3c3c;line-height:16px;">#802196F3</span>
<div class="r" style="left:729.3px;top:427.0px;width:272.70000000000005px;height:1px;background:#e3e3ea;"></div>
<span class="t" style="left:748.3px;top:411.7px;font-size:11px;color:#3c3c3c;line-height:16px;">Text color</span>
<div class="r" style="left:869.3px;top:413.15px;width:11.2px;height:11.2px;background:#b2b5be;"></div>
<span class="t" style="left:883.6px;top:411.1px;font-size:10.4px;color:#3c3c3c;line-height:16px;">#FFB2B5BE</span>
<div class="r" style="left:729.3px;top:446.0px;width:272.70000000000005px;height:1px;background:#e3e3ea;"></div>
<span class="t" style="left:748.3px;top:429.9px;font-size:11px;color:#3c3c3c;line-height:16px;">Visualization Mode</span>
<span class="t" style="left:869.5px;top:429.3px;font-size:10.7px;color:#3c3c3c;line-height:16px;">Solid</span>
<div class="r" style="left:729.3px;top:465.5px;width:272.70000000000005px;height:1px;background:#e3e3ea;"></div>
<span class="t" style="left:748.3px;top:449.2px;font-size:11px;color:#a9a9b0;line-height:16px;">Gradient</span>
<div class="r" style="left:869.3px;top:450.45px;width:11.4px;height:11.4px;background:#fff;border:1px solid #ececf0;box-sizing:border-box;"></div>
<div class="r" style="left:729.3px;top:466px;width:272.70000000000005px;height:18px;background:#d5d5d7;"></div>
<span class="t" style="left:748.3px;top:467.9px;font-size:10.9px;color:#1e1e1e;line-height:16px;font-weight:bold;">Profile. Maximum level</span>
<div class="r" style="left:729.3px;top:503.0px;width:272.70000000000005px;height:1px;background:#e3e3ea;"></div>
<span class="t" style="left:748.3px;top:486.7px;font-size:11px;color:#3c3c3c;line-height:16px;">Show</span>
<div class="r" style="left:867.5px;top:487.95px;width:11.4px;height:11.4px;background:#fff;border:1px solid #d4d4dc;box-sizing:border-box;"></div>
<div class="r" style="left:729.3px;top:522.4px;width:272.70000000000005px;height:1px;background:#e3e3ea;"></div>
<span class="t" style="left:748.3px;top:506.1px;font-size:11px;color:#3c3c3c;line-height:16px;">Type</span>
<span class="t" style="left:869.5px;top:505.5px;font-size:10.7px;color:#3c3c3c;line-height:16px;">Volume</span>
<div class="r" style="left:729.3px;top:541.8px;width:272.70000000000005px;height:1px;background:#e3e3ea;"></div>
<span class="t" style="left:748.3px;top:525.5px;font-size:11px;color:#3c3c3c;line-height:16px;">Extend to the first touch</span>
<div class="r" style="left:869.3px;top:526.8px;width:11.4px;height:11.4px;background:#fff;border:1px solid #d4d4dc;box-sizing:border-box;"></div>
<div class="r" style="left:729.3px;top:559.7px;width:272.70000000000005px;height:1px;background:#e3e3ea;"></div>
<span class="t" style="left:748.3px;top:544.1px;font-size:11px;color:#3c3c3c;line-height:16px;">POC Line Color</span>
<div class="r" style="left:869.3px;top:545.65px;width:11.2px;height:11.2px;background:#787b86;"></div>
<span class="t" style="left:883.6px;top:543.5px;font-size:10.4px;color:#3c3c3c;line-height:16px;">#FF787B86</span>
<div class="r" style="left:729.3px;top:577.5px;width:272.70000000000005px;height:1px;background:#e3e3ea;"></div>
<span class="t" style="left:748.3px;top:562.0px;font-size:11px;color:#3c3c3c;line-height:16px;">Text Color</span>
<div class="r" style="left:869.3px;top:563.5px;width:11.2px;height:11.2px;background:#787b86;"></div>
<span class="t" style="left:883.6px;top:561.4px;font-size:10.4px;color:#3c3c3c;line-height:16px;">#FF787B86</span>
<div class="r" style="left:729.3px;top:597.0px;width:272.70000000000005px;height:1px;background:#e3e3ea;"></div>
<span class="t" style="left:748.3px;top:580.6px;font-size:11px;color:#3c3c3c;line-height:16px;">Show value</span>
<div class="r" style="left:866.8px;top:581.95px;width:11.4px;height:11.4px;background:#fff;border:1px solid #d4d4dc;box-sizing:border-box;"></div>
<div class="r" style="left:729.3px;top:617.5px;width:272.70000000000005px;height:1px;background:#e3e3ea;"></div>
<span class="t" style="left:748.3px;top:600.6px;font-size:11px;color:#3c3c3c;line-height:16px;">Show date</span>
<div class="r" style="left:866.8px;top:601.95px;width:11.4px;height:11.4px;background:#fff;border:1px solid #d4d4dc;box-sizing:border-box;"></div>
<div class="r" style="left:729.3px;top:636.1px;width:272.70000000000005px;height:1px;background:#e3e3ea;"></div>
<span class="t" style="left:748.3px;top:620.2px;font-size:11px;color:#3c3c3c;line-height:16px;">Label</span>
<span class="t" style="left:869.5px;top:619.6px;font-size:10.7px;color:#3c3c3c;line-height:16px;">vPOC</span>
<div class="r" style="left:729.3px;top:636.6px;width:272.70000000000005px;height:17.799999999999955px;background:#d5d5d7;"></div>
<span class="t" style="left:748.3px;top:638.4px;font-size:10.9px;color:#1e1e1e;line-height:16px;font-weight:bold;">Profile. Value areas</span>
<div class="r" style="left:729.3px;top:673.4px;width:272.70000000000005px;height:1px;background:#e3e3ea;"></div>
<span class="t" style="left:748.3px;top:657.0px;font-size:11px;color:#3c3c3c;line-height:16px;">Drawing mode</span>
<span class="t" style="left:869.5px;top:656.4px;font-size:10.7px;color:#3c3c3c;line-height:16px;">Line</span>
<div class="r" style="left:729.3px;top:692.8px;width:272.70000000000005px;height:1px;background:#e3e3ea;"></div>
<span class="t" style="left:748.3px;top:676.5px;font-size:11px;color:#3c3c3c;line-height:16px;">Extend Lines</span>
<div class="r" style="left:869px;top:677.8px;width:11.4px;height:11.4px;background:#fff;border:1px solid #d4d4dc;box-sizing:border-box;"></div>
<div class="r" style="left:729.3px;top:710.6px;width:272.70000000000005px;height:1px;background:#e3e3ea;"></div>
<span class="t" style="left:748.3px;top:695.1px;font-size:11px;color:#3c3c3c;line-height:16px;">Color</span>
<div class="r" style="left:869.3px;top:696.6px;width:11.2px;height:11.2px;background:#787b86;"></div>
<span class="t" style="left:883.6px;top:694.5px;font-size:10.4px;color:#3c3c3c;line-height:16px;">#FF787B86</span>
<div class="r" style="left:729.3px;top:728.5px;width:272.70000000000005px;height:1px;background:#e3e3ea;"></div>
<span class="t" style="left:748.3px;top:712.9px;font-size:11px;color:#3c3c3c;line-height:16px;">Text Color</span>
<div class="r" style="left:869.3px;top:714.4499999999999px;width:11.2px;height:11.2px;background:#787b86;"></div>
<span class="t" style="left:883.6px;top:712.3px;font-size:10.4px;color:#3c3c3c;line-height:16px;">#FF787B86</span>
<div class="r" style="left:729.3px;top:747.5px;width:272.70000000000005px;height:1px;background:#e3e3ea;"></div>
<span class="t" style="left:748.3px;top:731.4px;font-size:11px;color:#3c3c3c;line-height:16px;">VAH label</span>
<span class="t" style="left:869.5px;top:730.8px;font-size:10.7px;color:#3c3c3c;line-height:16px;">VAH</span>
</div>
<div class="r" style="left:729px;top:745.5px;width:288px;height:55px;background:#f4f4f8;border:1px solid #dadae2;box-sizing:border-box;border-top:none;"></div>
<span class="t" style="left:739px;top:756.8px;font-size:13.5px;color:#333;line-height:16px;">External period</span>
<span class="t" style="left:739px;top:776.0px;font-size:11.15px;color:#333;line-height:16px;">Allows you to select one of the provided period types.</span>
<div class="r" style="left:729px;top:800px;width:288px;height:19px;background:#f4f4f8;border:1px solid #dadae2;box-sizing:border-box;"></div>
<span class="t" style="left:729px;width:288px;text-align:center;top:803.3px;font-size:10.3px;line-height:16px;color:#3c3c3c;">Description of <span style="color:#1b6ec2;text-decoration:underline;">Market profile &amp; TPO</span></span>
<div class="r" style="left:872.3px;top:830px;width:62.4px;height:21px;background:#0b7ad1;border-radius:2px;"></div>
<span class="t" style="left:753.5px;width:300px;text-align:center;top:833.5px;font-size:10.3px;color:#fff;line-height:16px;">OK</span>
<div class="r" style="left:941px;top:830px;width:63px;height:21px;background:#f7f7fa;border:1px solid #d6d6de;box-sizing:border-box;border-radius:2px;"></div>
<span class="t" style="left:822.5px;width:300px;text-align:center;top:833.5px;font-size:10.3px;color:#333;line-height:16px;">Cancel</span>
<div class="r" style="left:866.2px;top:127px;width:135.8px;height:220px;background:#fff;border:1px solid #d0d0d8;box-sizing:border-box;box-shadow:1px 2px 4px rgba(0,0,0,0.35);"></div>
<span class="t" style="left:871px;top:131.3px;font-size:10.9px;color:#3c3c3c;line-height:16px;">M1</span>
<span class="t" style="left:871px;top:149.4px;font-size:10.9px;color:#3c3c3c;line-height:16px;">M5</span>
<span class="t" style="left:871px;top:167.5px;font-size:10.9px;color:#3c3c3c;line-height:16px;">M15</span>
<span class="t" style="left:871px;top:185.5px;font-size:10.9px;color:#3c3c3c;line-height:16px;">M30</span>
<span class="t" style="left:871px;top:203.6px;font-size:10.9px;color:#3c3c3c;line-height:16px;">Hourly</span>
<span class="t" style="left:871px;top:221.7px;font-size:10.9px;color:#3c3c3c;line-height:16px;">H2</span>
<span class="t" style="left:871px;top:239.8px;font-size:10.9px;color:#3c3c3c;line-height:16px;">H4</span>
<span class="t" style="left:871px;top:257.9px;font-size:10.9px;color:#3c3c3c;line-height:16px;">H6</span>
<div class="r" style="left:868.6px;top:273.54px;width:132.4px;height:18.2px;background:#4da3dd;"></div>
<span class="t" style="left:871px;top:275.9px;font-size:10.9px;color:#fff;line-height:16px;">Daily</span>
<span class="t" style="left:871px;top:294.0px;font-size:10.9px;color:#3c3c3c;line-height:16px;">Weekly</span>
<span class="t" style="left:871px;top:312.1px;font-size:10.9px;color:#3c3c3c;line-height:16px;">Monthly</span>
<span class="t" style="left:871px;top:330.2px;font-size:10.9px;color:#3c3c3c;line-height:16px;">Custom</span>
<svg class="r" style="left:0;top:0" width="1030" height="903" viewBox="0 0 1030 903"><polygon points="533.50,15.35 529.15,22.88 520.45,22.88 516.10,15.35 520.45,7.82 529.15,7.82" fill="#151515"/><polygon points="531.24,15.35 528.02,20.93 521.58,20.93 518.36,15.35 521.58,9.77 528.02,9.77" fill="#fff"/><polygon points="517.90,15.35 519.90,12.05 525.80,12.05 521.40,19.05 520.10,19.05" fill="#151515"/><polygon points="527.00,14.15 524.40,18.35 529.60,18.35" fill="#151515"/><path d="M946.8 15H955" stroke="#111" stroke-width="2.3"/><rect x="975.6" y="11.8" width="7.6" height="6.6" fill="none" stroke="#111" stroke-width="1.1"/><path d="M975 12H983.8" stroke="#111" stroke-width="2.2"/><path d="M1004.8 11.8L1011.8 18.8M1011.8 11.8L1004.8 18.8" stroke="#111" stroke-width="1.5"/><polygon points="712.5,38.0 718.5,38.0 715.5,34.599999999999994" fill="#222"/><polygon points="713.8,80.7 719.8,80.7 716.8,77.3" fill="#222"/><polygon points="713.8,412.3 719.8,412.3 716.8,415.7" fill="#222"/><polygon points="1006.3,79.8 1012.5,79.8 1009.4,76.2" fill="#222"/><polygon points="1006.3,737.2 1012.5,737.2 1009.4,740.8" fill="#222"/><polygon points="529.9,77.3 529.9,82.3 524.9,82.3" fill="#222"/><polygon points="529.9,213.54000000000002 529.9,218.54000000000002 524.9,218.54000000000002" fill="#222"/><polygon points="529.9,332.75 529.9,337.75 524.9,337.75" fill="#222"/><polygon points="739.7,77.8 739.7,82.4 735.1,82.4" fill="#222"/><polygon points="739.7,248.95 739.7,253.54999999999998 735.1,253.54999999999998" fill="#222"/><polygon points="739.7,343.90000000000003 739.7,348.5 735.1,348.5" fill="#222"/><polygon points="739.7,472.3 739.7,476.9 735.1,476.9" fill="#222"/><polygon points="739.7,642.8000000000001 739.7,647.4000000000001 735.1,647.4000000000001" fill="#222"/><polygon points="992.0,363.55000000000007 998.0,363.55000000000007 995,366.95000000000005" fill="#222"/><polygon points="992.0,381.80000000000007 998.0,381.80000000000007 995,385.20000000000005" fill="#222"/><polygon points="992.0,399.65000000000003 998.0,399.65000000000003 995,403.05" fill="#222"/><polygon points="992.0,417.35 998.0,417.35 995,420.75" fill="#222"/><polygon points="992.0,549.8499999999999 998.0,549.8499999999999 995,553.25" fill="#222"/><polygon points="992.0,567.6999999999999 998.0,567.6999999999999 995,571.1" fill="#222"/><path d="M870.0 493.55L872.4000000000001 496.35L876.6 490.95" stroke="#222" stroke-width="1.3" fill="none"/><polygon points="992.1,116.0 998.3000000000001,116.0 995.2,119.6" fill="#fff"/><path d="M709.2 455.2C711 452.4 715.4 452.4 717.2 455.2C715.4 458 711 458 709.2 455.2Z" fill="#222"/><circle cx="713.2" cy="455.2" r="1.5" fill="#fff"/><circle cx="713.2" cy="455.2" r="0.8" fill="#222"/><path d="M900.6 122.4V136.2L903.8 133.2L906.2 138.6L908.4 137.6L906 132.4H910.4Z" fill="#fff" stroke="#111" stroke-width="0.9" stroke-linejoin="round"/><polygon points="884.6,867.6 884.6,873.4 888.2,870.5" fill="#222"/><path d="M1022 897L1027 892M1024.5 897L1027 894.5" stroke="#b8b8c0" stroke-width="1"/></svg>
</body></html>
